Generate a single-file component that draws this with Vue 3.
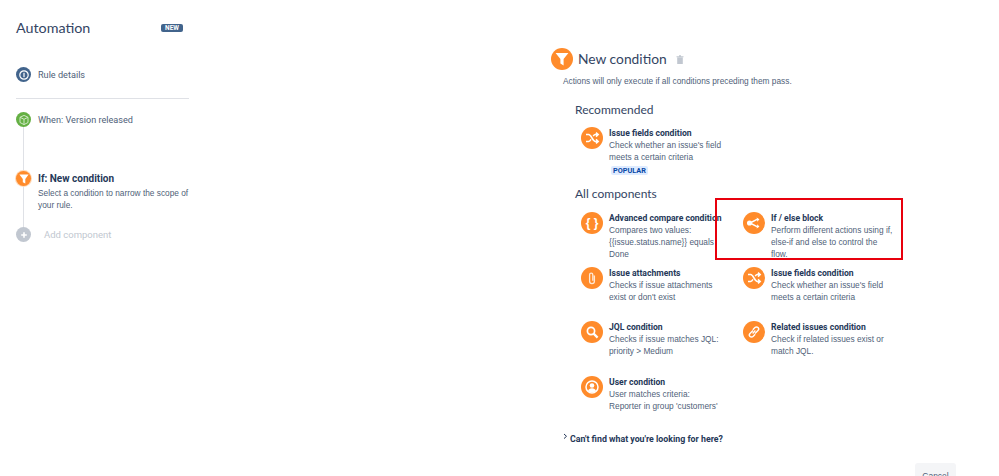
<script setup>
const components = [
  { icon: 'braces', title: 'Advanced compare condition', lines: ['Compares two values:', '{{issue.status.name}} equals', 'Done'] },
  { icon: 'branch', title: 'If / else block', lines: ['Perform different actions using if,', 'else-if and else to control the', 'flow.'] },
  { icon: 'clip', title: 'Issue attachments', lines: ['Checks if issue attachments', "exist or don't exist"] },
  { icon: 'shuffle', title: 'Issue fields condition', lines: ["Check whether an issue's field", 'meets a certain criteria'] },
  { icon: 'search', title: 'JQL condition', lines: ['Checks if issue matches JQL:', 'priority > Medium'] },
  { icon: 'link', title: 'Related issues condition', lines: ['Check if related issues exist or', 'match JQL.'] },
  { icon: 'user', title: 'User condition', lines: ['User matches criteria:', "Reporter in group 'customers'"] }
]
</script>

<template>
  <div class="page">
    <aside class="sidebar">
      <div class="side-head">
        <h1>Automation</h1>
        <span class="new-badge">NEW</span>
      </div>

      <div class="detail-row">
        <span class="dot dot-blue">
          <svg viewBox="0 0 16 16" width="16" height="16"><circle cx="8" cy="8" r="4.2" fill="none" stroke="#fff" stroke-width="1.2" /><rect x="7.4" y="5.8" width="1.2" height="4.4" fill="#fff" /></svg>
        </span>
        <span class="detail-label">Rule details</span>
      </div>

      <div class="timeline">
        <div class="step step-when">
          <span class="dot dot-green">
            <svg viewBox="0 0 16 16" width="16" height="16"><path d="M8 3.4l4 1.9v5.2l-4 2.1-4-2.1V5.3zM4 5.3l4 2 4-2M8 7.3v5.3" fill="none" stroke="#cfe8c4" stroke-width="1" stroke-linejoin="round" /></svg>
          </span>
          <span class="detail-label">When: Version released</span>
        </div>
        <div class="step step-if">
          <span class="dot dot-orange">
            <svg viewBox="0 0 16 16" width="16" height="16"><path d="M3.4 3.6h9.2L9.3 8v4.6L6.8 11.2V8z" fill="#fff" /></svg>
          </span>
          <div class="step-text">
            <strong>If: New condition</strong>
            <p>Select a condition to narrow the scope of your rule.</p>
          </div>
        </div>
        <div class="step step-add">
          <span class="dot dot-grey">
            <svg viewBox="0 0 16 16" width="16" height="16"><path d="M8 5.2v5.6M5.2 8h5.6" stroke="#fff" stroke-width="1.6" /></svg>
          </span>
          <span class="add-label">Add component</span>
        </div>
      </div>
    </aside>

    <main class="main">
      <div class="cond-head">
        <span class="head-icon">
          <svg viewBox="0 0 22 22" width="22" height="22"><path d="M4.6 5h12.800l-4.800 6v6.400l-3.200-2V11z" fill="#fff" /></svg>
        </span>
        <h2>New condition</h2>
        <svg class="trash" viewBox="0 0 8 9" width="8" height="9"><path d="M0.5 1.200h7v1h-7zM3 0.200h2v1H3zM1.200 2.600h5.600V9H1.200z" fill="#c1c7d0" /></svg>
      </div>
      <p class="cond-desc">Actions will only execute if all conditions preceding them pass.</p>

      <h3 class="section-recommended">Recommended</h3>
      <div class="item item-recommended">
        <span class="item-icon">
          <svg viewBox="0 0 22 22" width="22" height="22"><path d="M5 7.600h2.600c2.800 0 4 6.800 6.800 6.800H17M5 14.400h2.600c1 0 1.800-.9 2.400-2M12.200 9.200c.6-.9 1.300-1.600 2.200-1.600H17M15 5.600l2.200 2-2.200 2M15 12.400l2.200 2-2.200 2" fill="none" stroke="#fff" stroke-width="1.500" /></svg>
        </span>
        <div class="item-text">
          <strong>Issue fields condition</strong>
          <span>Check whether an issue's field</span>
          <span>meets a certain criteria</span>
          <em class="popular">POPULAR</em>
        </div>
      </div>

      <h3 class="section-all">All components</h3>
      <div class="grid">
        <div v-for="c in components" :key="c.title" class="item">
          <span class="item-icon">
            <span v-if="c.icon === 'braces'" class="braces">{ }</span>
            <svg v-else viewBox="0 0 22 22" width="22" height="22" fill="none" stroke="#fff" stroke-width="1.5">
              <g v-if="c.icon === 'branch'">
                <path d="M7 11l7-3.600M7 11l7 3.600" />
                <circle cx="6.500" cy="11" r="1.800" fill="#fff" />
                <path d="M13.600 5.400l2.800 1.800-2 2.600zM13.600 16.600l2.800-1.800-2-2.600z" fill="#fff" stroke="none" />
              </g>
              <path v-else-if="c.icon === 'clip'" d="M13.400 8.600v5.600a2.400 2.400 0 0 1-4.800 0V7.800a1.600 1.600 0 0 1 3.200 0v6" stroke-width="1.300" opacity=".8" />
              <path v-else-if="c.icon === 'shuffle'" d="M5 7.600h2.600c2.800 0 4 6.800 6.800 6.800H17M5 14.400h2.600c1 0 1.800-.9 2.400-2M12.200 9.200c.6-.9 1.300-1.600 2.200-1.600H17M15 5.600l2.200 2-2.200 2M15 12.400l2.200 2-2.200 2" />
              <g v-else-if="c.icon === 'search'" stroke-width="1.700">
                <circle cx="10" cy="10" r="3.600" />
                <path d="M12.600 12.600l4 4" stroke-width="2.200" />
              </g>
              <g v-else-if="c.icon === 'link'" stroke-width="1.400">
                <path d="M10 9.400l-3 3a2.100 2.100 0 0 0 3 3l2.200-2.200" />
                <path d="M12 12.600l3-3a2.100 2.100 0 0 0-3-3L9.800 8.800" />
                <path d="M9.600 12.400l2.800-2.800" />
              </g>
              <g v-else-if="c.icon === 'user'">
                <circle cx="11" cy="11" r="6" />
                <circle cx="11" cy="9.500" r="2.300" fill="#fff" stroke="none" />
                <path d="M7 15c.6-2 2-2.800 4-2.800s3.400.8 4 2.800a6 6 0 0 1-8 0z" fill="#fff" stroke="none" />
              </g>
            </svg>
          </span>
          <div class="item-text">
            <strong>{{ c.title }}</strong>
            <span v-for="line in c.lines" :key="line">{{ line }}</span>
          </div>
        </div>
      </div>

      <div class="help-row">
        <svg viewBox="0 0 5 7" width="5" height="7"><path d="M1 1l2.500 2.300L1 5.600" fill="none" stroke="#253858" stroke-width="1" /></svg>
        <strong>Can't find what you're looking for here?</strong>
      </div>

      <div class="actions">
        <button class="cancel">Cancel</button>
      </div>
    </main>

    <div class="highlight"></div>
  </div>
</template>

<style>
html, body {
  margin: 0;
  overflow: hidden;
  background: #fff;
}
</style>

<style scoped>
.page {
  position: relative;
  display: flex;
  width: 999px;
  height: 476px;
  overflow: hidden;
  font-family: "Liberation Sans", Arial, sans-serif;
  font-size: 8.320px;
  line-height: 12px;
  color: #505f79;
}

.sidebar {
  width: 173px;
  margin-left: 16px;
  flex-shrink: 0;
}

.side-head {
  display: flex;
  justify-content: space-between;
  align-items: center;
  padding: 19px 6px 0 0;
  height: 18px;
}

.side-head h1 {
  margin: 0;
  font-family: Lato, sans-serif;
  font-size: 14.300px;
  font-weight: 400;
  color: #344563;
}

.new-badge {
  background: #42648c;
  color: #fff;
  font-family: Roboto, sans-serif;
  font-size: 6.500px;
  font-weight: 700;
  line-height: 8px;
  padding: 0 4px;
  border-radius: 2px;
}

.detail-row {
  display: flex;
  align-items: center;
  gap: 7px;
  margin-top: 30px;
  padding-bottom: 16px;
  border-bottom: 1px solid #dfe1e6;
}

.detail-label {
  font-family: Roboto, sans-serif;
  font-size: 9.150px;
  color: #505f79;
}

.dot {
  display: flex;
  align-items: center;
  justify-content: center;
  width: 15px;
  height: 15px;
  border-radius: 50%;
  flex-shrink: 0;
  position: relative;
  z-index: 1;
}

.dot svg {
  flex-shrink: 0;
}

.dot-blue { background: #42648c; }
.dot-green { background: #65b044; }
.dot-orange { background: #ff8b2b; box-shadow: 0 0 0 1px #ffd9b8; }
.dot-grey { background: #c1c7d0; }

.timeline {
  position: relative;
  padding-top: 13px;
}

.timeline::before {
  content: "";
  position: absolute;
  left: 7px;
  top: 20px;
  bottom: 8px;
  width: 1px;
  background: #dfe1e6;
}

.step {
  display: flex;
  align-items: flex-start;
  gap: 7px;
}

.step-when {
  align-items: center;
  height: 15px;
}

.step-if {
  margin-top: 44px;
}

.step-text strong {
  display: block;
  font-family: Roboto, sans-serif;
  font-size: 10px;
  font-weight: 700;
  color: #253858;
  margin: 2px 0 2px;
}

.step-text p {
  margin: 0;
  width: 155px;
}

.step-add {
  align-items: center;
  gap: 13px;
  margin-top: 16px;
}

.add-label {
  font-family: Roboto, sans-serif;
  font-size: 9.500px;
  color: #c1c7d0;
}

.main {
  margin-left: 362px;
  width: 410px;
  flex-shrink: 0;
}

.cond-head {
  display: flex;
  align-items: center;
  margin-top: 48px;
  height: 22px;
}

.head-icon {
  display: flex;
  width: 22px;
  height: 22px;
  border-radius: 50%;
  background: #ff8b2b;
}

.cond-head h2 {
  margin: 0 0 0 5px;
  font-family: Lato, sans-serif;
  font-size: 13.800px;
  font-weight: 400;
  color: #344563;
}

.trash {
  margin-left: 9px;
}

.cond-desc {
  margin: 5px 0 0 12px;
}

h3 {
  margin: 0 0 0 24px;
  font-family: Lato, sans-serif;
  font-size: 12px;
  font-weight: 400;
  line-height: 16px;
  color: #344563;
}

.section-recommended {
  margin-top: 15px;
}

.section-all {
  margin-top: 10px;
}

.item {
  display: flex;
  gap: 6px;
  min-width: 0;
}

.item-recommended {
  margin: 9px 0 0 30px;
  height: 49px;
}

.item-icon {
  display: flex;
  align-items: center;
  justify-content: center;
  width: 22px;
  height: 22px;
  border-radius: 50%;
  background: #ff8b2b;
  flex-shrink: 0;
}

.braces {
  color: #fff;
  font-size: 12px;
  font-weight: 700;
  line-height: 22px;
}

.item-text {
  display: flex;
  flex-direction: column;
  align-items: flex-start;
  white-space: nowrap;
}

.item-text strong {
  font-family: Roboto, sans-serif;
  font-size: 8.600px;
  font-weight: 700;
  color: #253858;
}

.popular {
  margin: 3px 0 0 2px;
  padding: 0 2px;
  background: #deebff;
  border-radius: 2px;
  color: #0747a6;
  font-family: Roboto, sans-serif;
  font-size: 7.300px;
  font-style: normal;
  font-weight: 700;
  line-height: 9px;
}

.grid {
  display: grid;
  grid-template-columns: 162px 162px;
  grid-auto-rows: 54.700px;
  margin: 10px 0 0 30px;
}

.help-row {
  display: flex;
  gap: 2px;
  align-items: flex-start;
  margin: 0 0 0 12px;
  padding-top: 2px;
}

.help-row strong {
  font-family: Roboto, sans-serif;
  font-size: 8.800px;
  font-weight: 700;
  color: #253858;
}

.actions {
  display: flex;
  justify-content: flex-end;
  margin-top: 18px;
  padding-right: 5px;
}

.cancel {
  width: 41px;
  height: 24px;
  padding: 3px 0 0;
  border: none;
  border-radius: 3px;
  background: #f4f5f7;
  color: #505f79;
  font-family: "Liberation Sans", sans-serif;
  font-size: 8.500px;
  align-self: flex-start;
}

/* annotation drawn over the screenshot */
.highlight {
  position: absolute;
  left: 715px;
  top: 198px;
  width: 184px;
  height: 58px;
  border: 2px solid #e8000d;
  pointer-events: none;
}
</style>
